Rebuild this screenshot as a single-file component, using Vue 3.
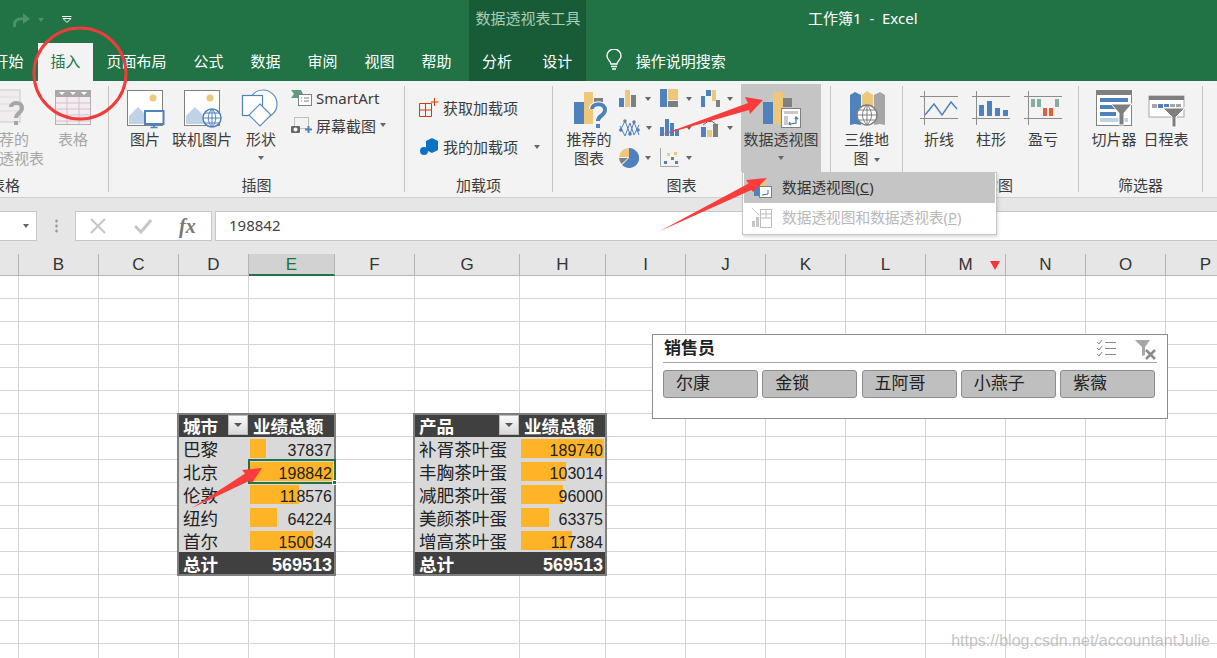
<!-- App.vue - Excel insert ribbon with pivot tables -->
<template>
  <div class="app">
    <div class="title-row">
      <div class="qat">
        <svg class="redo" width="20" height="16" viewBox="0 0 20 16"><path d="M3 15c-2-6 2-9 10-8" fill="none" stroke="#4f8f6c" stroke-width="3" /><path d="M11 1l7 6-7 5z" fill="#4f8f6c" /></svg>
        <span class="caret dim"></span>
        <svg class="qat-more" width="10" height="8" viewBox="0 0 10 8"><path d="M0 .5h9.500M1 2.500h8l-4 4z" fill="none" stroke="#fff" /></svg>
      </div>
      <div class="tool-title">数据透视表工具</div>
      <div class="doc-title">工作簿1 &nbsp;-&nbsp; Excel</div>
    </div>

    <div class="tab-row">
      <span v-for="tab in mainTabs" :key="tab" :class="['tab', { active: tab === '插入' }]">{{ tab }}</span>
      <div class="tool-tabs">
        <span class="tab">分析</span>
        <span class="tab">设计</span>
      </div>
      <svg class="bulb" width="18" height="22" viewBox="0 0 18 22"><path d="M6 15c0-3-4-4-4-8a7 7 0 0 1 14 0c0 4-4 5-4 8z" fill="none" stroke="#fff" stroke-width="1.400" /><path d="M6 17.500h6M7 20h4" stroke="#fff" stroke-width="1.500" /></svg>
      <span class="search">操作说明搜索</span>
    </div>

    <div class="ribbon">
      <!-- 表格 -->
      <section class="group g-table">
        <div class="tools">
          <div class="big muted w-rec">
            <svg width="40" height="40" viewBox="0 0 40 40"><rect x="1" y="1" width="32" height="32" fill="#f1ecee" stroke="#c9c9c9" /><path d="M1 8h32M1 15h32M1 22h32M12 1v32" stroke="#ddd" /><path d="M24 18c0-5 11-6 11 1 0 5-6 5-6 10" fill="none" stroke="#a6a6a6" stroke-width="4" /><rect x="27" y="32" width="4" height="4" fill="#a6a6a6" /></svg>
            <span>推荐的<br />数据透视表</span>
          </div>
          <div class="big muted w-table">
            <svg width="40" height="40" viewBox="0 0 40 40"><rect x="2.500" y="1.500" width="35" height="34" fill="#f4ecf0" stroke="#b5b1b3" /><rect x="2" y="1" width="36" height="7" fill="#a9a5a8" /><path d="M6 3h6l-3 3zM17 3h6l-3 3zM28 3h6l-3 3z" fill="#fff" /><path d="M3 14h34M3 20h34M3 26h34M3 32h34M14 8v27M26 8v27" stroke="#cfc5ca" /></svg>
            <span>表格</span>
          </div>
        </div>
        <div class="group-name name-table">表格</div>
      </section>

      <!-- 插图 -->
      <section class="group g-illus">
        <div class="tools">
          <div class="big w-pic">
            <svg width="40" height="40" viewBox="0 0 40 40"><rect x="2.500" y="1.500" width="35" height="35" fill="#fff" stroke="#7f7f7f" /><circle cx="28" cy="9" r="3.500" fill="#eec77a" /><path d="M4 35V27l9-9 9 9v8z" fill="#bfd2e6" /><rect x="20" y="22" width="18.500" height="13" fill="#fff" stroke="#4f81bd" stroke-width="2" /><path d="M29 35v3M25.500 38.500h7" stroke="#4f81bd" stroke-width="1.500" /></svg>
            <span>图片</span>
          </div>
          <div class="big w-online">
            <svg width="40" height="40" viewBox="0 0 40 40"><rect x="2.500" y="1.500" width="35" height="35" fill="#fff" stroke="#7f7f7f" /><circle cx="28" cy="9" r="3.500" fill="#eec77a" /><path d="M4 35V27l9-9 9 9v8z" fill="#bfd2e6" /><circle cx="30" cy="29" r="9" fill="#fff" stroke="#4f81bd" stroke-width="1.500" /><path d="M21 29h18M22.500 24h15M22.500 34h15M30 20c-5 5-5 13 0 18M30 20c5 5 5 13 0 18M30 20v18" fill="none" stroke="#4f81bd" /></svg>
            <span>联机图片</span>
          </div>
          <div class="big w-shape">
            <svg width="40" height="40" viewBox="0 0 40 40"><circle cx="22" cy="15" r="14" fill="#fff" stroke="#5b8cc0" stroke-width="1.200" /><rect x="1.500" y="6.500" width="20" height="20" fill="#fff" stroke="#4f81bd" stroke-width="1.200" /><path d="M19 15l11 11-11 11L8 26z" fill="#fff" stroke="#5b8cc0" stroke-width="1.200" /></svg>
            <span>形状</span>
            <i class="caret"></i>
          </div>
          <div class="side">
            <div class="side-row">
              <svg width="22" height="18" viewBox="0 0 22 18"><path d="M0 1h10l2 4-2 4H0l3-4z" fill="#5c9d82" /><rect x="7.500" y="5.500" width="13" height="11" fill="#fff" stroke="#7f7f7f" /><path d="M10 9h1M13 9h5M10 12h1M13 12h5" stroke="#7f7f7f" /></svg>
              <span>SmartArt</span>
            </div>
            <div class="side-row">
              <svg width="22" height="18" viewBox="0 0 22 18"><rect x="3.500" y="1.500" width="14" height="11" fill="none" stroke="#8a8a8a" stroke-dasharray="1 1" /><rect x="0" y="10" width="9" height="7" rx="1" fill="#666" /><circle cx="4.500" cy="13.500" r="2" fill="#fff" /><path d="M14 13.500h7M17.500 10v7" stroke="#4f81bd" stroke-width="2" /></svg>
              <span>屏幕截图</span>
              <i class="caret"></i>
            </div>
          </div>
        </div>
        <div class="group-name">插图</div>
      </section>

      <!-- 加载项 -->
      <section class="group g-addin">
        <div class="tools addin-list">
          <div class="addin">
            <svg width="20" height="20" viewBox="0 0 20 20"><path d="M.5 5.500h12v13H.5zM6.500 5.500v13M.5 12h12" fill="none" stroke="#d83b01" /><path d="M15.500 0v8M12 4h7.500" stroke="#d83b01" /></svg>
            <span>获取加载项</span>
          </div>
          <div class="addin">
            <svg width="20" height="20" viewBox="0 0 20 20"><path d="M7 4l6-3 6 3v9l-6 3-6-3z" fill="#0c72c4" /><circle cx="5" cy="14" r="4" fill="#0c72c4" /></svg>
            <span>我的加载项</span>
            <i class="caret addin-caret"></i>
          </div>
        </div>
        <div class="group-name">加载项</div>
      </section>

      <!-- 图表 -->
      <section class="group g-chart">
        <div class="tools">
          <div class="big w-rec-chart">
            <svg width="40" height="40" viewBox="0 0 40 40"><rect x="5" y="13" width="10" height="22" fill="#4f81bd" /><rect x="15" y="3" width="9" height="32" fill="#eec77a" /><rect x="25" y="9" width="9" height="5" fill="#7f7f7f" /><path d="M23 20c0-6 13-7 13 1 0 6-7 5-7 11" fill="none" stroke="#fff" stroke-width="6" /><path d="M23 20c0-6 13-7 13 1 0 6-7 5-7 11" fill="none" stroke="#4f81bd" stroke-width="4" /><rect x="27" y="35" width="4" height="4" fill="#4f81bd" /></svg>
            <span>推荐的<br />图表</span>
          </div>
          <div class="mini-grid">
            <div class="mini"><svg width="20" height="20" viewBox="0 0 20 20"><rect x="0" y="9" width="5" height="9" fill="#4f81bd" /><rect x="6" y="1" width="5" height="17" fill="#eec77a" /><rect x="12" y="6" width="5" height="12" fill="#7f7f7f" /></svg><i class="caret"></i></div>
            <div class="mini"><svg width="20" height="20" viewBox="0 0 20 20"><rect x="0" y="0" width="7" height="18" fill="#4f81bd" /><rect x="8" y="0" width="10" height="11" fill="#eec77a" /><rect x="8" y="12" width="10" height="6" fill="#7f7f7f" /></svg><i class="caret"></i></div>
            <div class="mini"><svg width="20" height="20" viewBox="0 0 20 20"><rect x="0" y="7" width="4" height="11" fill="#4f81bd" /><rect x="5" y="1" width="5" height="6" fill="#4f81bd" /><rect x="11" y="1" width="4" height="11" fill="#eec77a" /><rect x="15" y="11" width="4" height="7" fill="#7f7f7f" /></svg><i class="caret"></i></div>
            <div class="mini"><svg width="21" height="21" viewBox="0 0 21 21"><path d="M1 13l5-10 5 13 4-12 5 13M1 8l5 10 5-13 4 12 5-10" fill="none" stroke="#4f81bd" /><circle cx="6" cy="3" r="1.800" fill="#7f7f7f" /><circle cx="11" cy="16" r="1.800" fill="#4f81bd" /><circle cx="15" cy="4" r="1.800" fill="#7f7f7f" /><circle cx="1.800" cy="12" r="1.800" fill="#4f81bd" /><circle cx="19" cy="12" r="1.800" fill="#4f81bd" /></svg><i class="caret"></i></div>
            <div class="mini"><svg width="20" height="20" viewBox="0 0 20 20"><rect x="0" y="9" width="4" height="9" fill="#4f81bd" /><rect x="5" y="1" width="4" height="17" fill="#4f81bd" /><rect x="10" y="5" width="4" height="13" fill="#4f81bd" /><rect x="15" y="11" width="4" height="7" fill="#4f81bd" /></svg><i class="caret"></i></div>
            <div class="mini"><svg width="20" height="20" viewBox="0 0 20 20"><rect x="0" y="9" width="5" height="10" fill="#4f81bd" /><rect x="6" y="12" width="5" height="7" fill="#eec77a" /><rect x="12" y="6" width="5" height="13" fill="#7f7f7f" /><path d="M2 7l7-5 7 5" fill="none" stroke="#666" /><circle cx="9" cy="2.500" r="1.800" fill="#666" /></svg><i class="caret"></i></div>
            <div class="mini"><svg width="20" height="20" viewBox="0 0 20 20"><path d="M10 0a10 10 0 1 1-7 17l7-7z" fill="#4f81bd" /><path d="M10 9V0A10 10 0 0 0 0 9z" fill="#eec77a" /><path d="M9 10H0a10 10 0 0 0 2.500 6z" fill="#7f7f7f" /></svg><i class="caret"></i></div>
            <div class="mini"><svg width="20" height="20" viewBox="0 0 20 20"><path d="M.5 0v18.500H19" fill="none" stroke="#a6a6a6" /><rect x="4" y="13" width="3" height="3" fill="#4f81bd" /><rect x="7" y="5" width="3" height="3" fill="#eec77a" /><rect x="11" y="9" width="3" height="3" fill="#7f7f7f" /><rect x="14" y="4" width="3" height="3" fill="#eec77a" /><rect x="15" y="13" width="3" height="3" fill="#4f81bd" /></svg><i class="caret"></i></div>
          </div>
          <div class="big w-pivot open">
            <svg width="40" height="40" viewBox="0 0 40 40"><rect x="2" y="13" width="10" height="22" fill="#4f81bd" /><rect x="12" y="3" width="10" height="32" fill="#eec77a" /><rect x="22" y="9" width="9" height="9" fill="#7f7f7f" /><rect x="20.500" y="19.500" width="19" height="19" fill="#fff" stroke="#7f7f7f" /><path d="M23 22h14v3H23zM23 27h4v9h-4z" fill="#c9c9c9" /><path d="M29 35l6-1v-6M34 30l1-2 2 2M29 33l-1 2 2 1" fill="none" stroke="#2f75b5" stroke-width="1.200" /></svg>
            <span>数据透视图</span>
            <i class="caret"></i>
          </div>
        </div>
        <div class="group-name name-chart">图表</div>
      </section>

      <!-- 三维地图 -->
      <section class="group g-map">
        <div class="tools">
          <div class="big w-map">
            <svg width="40" height="40" viewBox="0 0 40 40"><path d="M3 6l5-3 6 3v30l-6-1-5 1z" fill="#4f81bd" /><path d="M15 6l5-4 6 4v26H15z" fill="#eec77a" /><path d="M27 6l6-3 5 3v30l-5-1-6 1z" fill="#a6a6a6" /><circle cx="20" cy="26" r="10" fill="#fff" stroke="#7f7f7f" stroke-width="1.400" /><path d="M10 26h20M11.500 21h17M11.500 31h17M20 16c-6 6-6 14 0 20M20 16c6 6 6 14 0 20M20 16v20" fill="none" stroke="#7f7f7f" /></svg>
            <span>三维地<br />图<i class="caret inline"></i></span>
          </div>
        </div>
      </section>

      <!-- 迷你图 -->
      <section class="group g-spark">
        <div class="tools">
          <div class="big w-spark">
            <svg width="40" height="40" viewBox="0 0 40 40"><path d="M1 7.500h38M1 29.500h38M5.500 2v34" stroke="#8c8c8c" /><path d="M6 26l9-11 8 11 9-13 6 7" fill="none" stroke="#4f81bd" stroke-width="1.400" /></svg>
            <span>折线</span>
          </div>
          <div class="big w-spark">
            <svg width="40" height="40" viewBox="0 0 40 40"><path d="M1 7.500h38M1 29.500h38M5.500 2v34" stroke="#8c8c8c" /><rect x="8" y="16" width="5" height="11" fill="#4f81bd" /><rect x="16" y="12" width="5" height="15" fill="#4f81bd" /><rect x="24" y="19" width="5" height="8" fill="#4f81bd" /><rect x="32" y="21" width="5" height="6" fill="#4f81bd" /></svg>
            <span>柱形</span>
          </div>
          <div class="big w-spark">
            <svg width="40" height="40" viewBox="0 0 40 40"><path d="M1 7.500h38M1 29.500h38M5.500 2v34" stroke="#8c8c8c" /><rect x="8" y="10" width="4" height="8" fill="#7fb19b" /><rect x="14" y="10" width="4" height="8" fill="#7fb19b" /><rect x="32" y="10" width="4" height="8" fill="#7fb19b" /><rect x="20" y="19" width="4" height="8" fill="#e0603e" /><rect x="26" y="19" width="4" height="8" fill="#e0603e" /></svg>
            <span>盈亏</span>
          </div>
        </div>
        <div class="group-name">迷你图</div>
      </section>

      <!-- 筛选器 -->
      <section class="group g-filter">
        <div class="tools">
          <div class="big w-slicer">
            <svg width="40" height="40" viewBox="0 0 40 40"><rect x="2.500" y="1.500" width="35" height="35" fill="#fff" stroke="#7f7f7f" /><rect x="2" y="1" width="36" height="5" fill="#7f7f7f" /><rect x="6" y="9" width="28" height="4" fill="#4f81bd" /><rect x="6" y="16" width="24" height="4" fill="#4f81bd" /><rect x="6" y="23" width="16" height="4" fill="#4f81bd" /><rect x="6" y="29" width="28" height="4" fill="#bfd2e6" /><path d="M17 15h21l-8 9v12h-5V24z" fill="#7f7f7f" stroke="#fff" /></svg>
            <span>切片器</span>
          </div>
          <div class="big w-slicer">
            <svg width="40" height="40" viewBox="0 0 40 40"><rect x="3" y="7" width="35" height="21" fill="#fff" stroke="#a6a6a6" /><rect x="3" y="7" width="35" height="4" fill="#7f7f7f" /><rect x="6" y="15" width="5" height="4" fill="#a6a6a6" /><rect x="12" y="15" width="5" height="4" fill="#4f81bd" /><rect x="18" y="15" width="5" height="3" fill="#4f81bd" /><rect x="24" y="15" width="5" height="3" fill="#a6a6a6" /><rect x="30" y="15" width="5" height="3" fill="#a6a6a6" /><path d="M17 19h22l-9 9v10h-4V28z" fill="#7f7f7f" stroke="#fff" /></svg>
            <span>日程表</span>
          </div>
        </div>
        <div class="group-name">筛选器</div>
      </section>
    </div>

    <div class="formula-row">
      <div class="name-box"><i class="caret"></i></div>
      <div class="grip"></div>
      <div class="fx-box">
        <svg width="18" height="18" viewBox="0 0 18 18"><path d="M2 2l14 14M16 2L2 16" stroke="#c6c6c6" stroke-width="2" /></svg>
        <svg width="18" height="18" viewBox="0 0 18 18"><path d="M1 9l6 6L17 3" fill="none" stroke="#c6c6c6" stroke-width="3" /></svg>
        <span class="fx">fx</span>
      </div>
      <div class="formula-input">198842</div>
    </div>

    <div class="sheet">
      <div v-for="col in columns" :key="col" :class="['col-head', { current: col === 'E' }]">
        {{ col }}
        <i v-if="col === 'M'" class="red-flag"></i>
      </div>
      <template v-for="cell in cells" :key="cell.id">
        <div :class="['cell', cell.kind]">
          <i v-if="cell.bar" class="bar" :style="{ width: cell.bar + 'px' }"></i>
          <span v-if="cell.text !== undefined" class="cell-text">{{ cell.text }}</span>
          <i v-if="cell.dropdown" class="dropdown"></i>
          <i v-if="cell.frame" class="frame" :style="{ width: cell.frame + 'px' }"></i>
          <i v-if="cell.selected" class="selection"></i>
        </div>
      </template>
    </div>

    <!-- floating slicer -->
    <div class="slicer">
      <div class="slicer-head">
        <b>销售员</b>
        <svg width="20" height="18" viewBox="0 0 20 18"><path d="M0 2l2 2 3-4M0 8l2 2 3-4M0 14l2 2 3-4" fill="none" stroke="#8a8a8a" /><path d="M8 2.500h11M8 8.500h11M8 14.500h11" stroke="#8a8a8a" /></svg>
        <svg class="clear" width="22" height="20" viewBox="0 0 22 20"><path d="M0 0h15l-5 7v8l-3 1V7z" fill="#a6a6a6" /><path d="M11 10l9 9M20 10l-9 9" stroke="#8a8a8a" stroke-width="2.500" /></svg>
      </div>
      <div class="slicer-items">
        <div v-for="name in sellers" :key="name" class="slicer-item">{{ name }}</div>
      </div>
    </div>

    <!-- dropdown under 数据透视图 -->
    <div class="menu">
      <div class="menu-item hot">
        <svg width="22" height="22" viewBox="0 0 22 22"><rect x="3" y="8" width="6" height="11" fill="#4f81bd" /><rect x="9" y="3" width="5" height="16" fill="#eec77a" /><rect x="8.500" y="9.500" width="12" height="11" fill="#fff" stroke="#7f7f7f" /><path d="M11 18l6-1v-4" fill="none" stroke="#2f75b5" /></svg>
        <span>数据透视图(<u>C</u>)</span>
      </div>
      <div class="menu-item off">
        <svg width="22" height="22" viewBox="0 0 22 22"><path d="M1 1l7 7" stroke="#c6c6c6" /><rect x="1" y="14" width="3" height="6" fill="#c6c6c6" /><rect x="5" y="10" width="3" height="10" fill="#c6c6c6" /><rect x="9.500" y="2.500" width="11" height="18" fill="#fff" stroke="#bdbdbd" /><path d="M10 7h10M10 11h10M15 3v8" stroke="#bdbdbd" /></svg>
        <span>数据透视图和数据透视表(<u>P</u>)</span>
      </div>
    </div>

    <!-- hand-drawn annotations -->
    <svg class="marks" width="1217" height="658" viewBox="0 0 1217 658">
      <ellipse cx="80" cy="73.500" rx="46" ry="45.500" fill="none" stroke="#f23b3b" stroke-width="3" />
      <path d="M658 136L748 103 745 97 763 100 750 114 749 110z" fill="#fb3c3c" />
      <path d="M660 231L748.500 183.500 746 180 767 178 753 192 751.500 190z" fill="#fb3c3c" />
      <path d="M192 508L245 473.500 242 470 262 468 252 483 249 481z" fill="#fb3c3c" />
    </svg>

    <div class="watermark">https://blog.csdn.net/accountantJulie</div>
  </div>
</template>

<script setup>
const mainTabs = ['开始', '插入', '页面布局', '公式', '数据', '审阅', '视图', '帮助'];
const columns = ['', 'B', 'C', 'D', 'E', 'F', 'G', 'H', 'I', 'J', 'K', 'L', 'M', 'N', 'O', 'P', 'Q'];
const sellers = ['尔康', '金锁', '五阿哥', '小燕子', '紫薇'];

const tables = [
  {
    col: 3,
    head: '城市',
    frame: 159,
    total: 569513,
    rows: [['巴黎', 37837], ['北京', 198842], ['伦敦', 118576], ['纽约', 64224], ['首尔', 150034]]
  },
  {
    col: 6,
    head: '产品',
    frame: 194,
    total: 569513,
    rows: [['补胥茶叶蛋', 189740], ['丰胸茶叶蛋', 103014], ['减肥茶叶蛋', 96000], ['美颜茶叶蛋', 63375], ['增高茶叶蛋', 117384]]
  }
];

const ROW_COUNT = 17;
const TOP_ROW = 6;

function tableCell(row, col) {
  for (const table of tables) {
    const side = col - table.col;
    const index = row - TOP_ROW;
    if ((side !== 0 && side !== 1) || index < 0 || index > 6) continue;
    if (index === 0) {
      return side === 0
        ? { kind: 'head', text: table.head, dropdown: true, frame: table.frame }
        : { kind: 'head', text: '业绩总额' };
    }
    if (index === 6) {
      return side === 0
        ? { kind: 'total', text: '总计' }
        : { kind: 'total num', text: table.total };
    }
    const [label, value] = table.rows[index - 1];
    if (side === 0) return { kind: 'body', text: label };
    const max = Math.max(...table.rows.map(r => r[1]));
    return {
      kind: 'body num',
      text: value,
      bar: Math.round((value / max) * 83),
      selected: value === 198842
    };
  }
  return { kind: '' };
}

const cells = [];
for (let row = 0; row < ROW_COUNT; row++) {
  for (let col = 0; col < columns.length; col++) {
    cells.push({ id: row + '-' + col, ...tableCell(row, col) });
  }
}
</script>

<style>
html,
body {
  margin: 0;
  overflow: hidden;
}
</style>

<style scoped>
.app {
  position: relative;
  width: 1217px;
  height: 658px;
  overflow: hidden;
  background: #fff;
  color: #3c3c3c;
  font-family: "Noto Sans", "Noto Sans CJK SC", sans-serif;
  font-size: 15px;
}

i {
  font-style: normal;
}

/* title bar */
.title-row {
  display: flex;
  height: 43px;
  background: #217346;
  color: #fff;
}

.qat {
  display: flex;
  align-items: center;
  width: 469px;
  padding-left: 12px;
  padding-bottom: 3px;
  box-sizing: border-box;
}

.qat-more {
  margin-left: 18px;
}

.tool-title {
  width: 117px;
  padding-left: 1px;
  box-sizing: border-box;
  background: #185c37;
  color: #a9cdb9;
  text-align: center;
  line-height: 37px;
}

.doc-title {
  margin-left: 222px;
  line-height: 37px;
}

.caret {
  display: inline-block;
  width: 0;
  height: 0;
  border-left: 3.500px solid transparent;
  border-right: 3.500px solid transparent;
  border-top: 4px solid #666;
}

.caret.dim {
  margin-left: 6px;
  border-top-color: #4f8f6c;
}

.caret.inline {
  margin-left: 5px;
  vertical-align: middle;
}

/* tabs */
.tab-row {
  display: flex;
  align-items: stretch;
  height: 38px;
  margin-left: -20px;
  background: #217346;
  color: #fff;
}

.tab {
  display: flex;
  flex: none;
  align-items: center;
  padding: 0 13.500px 4px;
  white-space: nowrap;
}

.tab.active {
  background: #f3f3f3;
  color: #217346;
  margin-left: 1px;
  padding: 0 12.500px 4px;
}

.tool-tabs {
  display: flex;
  flex: none;
  margin-left: 3.500px;
  width: 117px;
  background: #185c37;
  justify-content: center;
}

.tool-tabs .tab {
  padding: 0 15px 4px;
}

.bulb {
  margin: 6px 13px 0 19px;
}

.search {
  line-height: 36px;
}

/* ribbon */
.ribbon {
  display: flex;
  align-items: flex-start;
  height: 116px;
  padding-top: 5px;
  box-sizing: border-box;
  background: #f3f3f3;
}

.group {
  display: flex;
  flex-direction: column;
  box-sizing: border-box;
  height: 106px;
  border-right: 1px solid #c6c6c6;
}

.tools {
  display: flex;
  flex: 1;
  min-height: 0;
}

.group-name {
  height: 14px;
  line-height: 14px;
  text-align: center;
}

.g-table {
  width: 109px;
}

.g-table .tools {
  margin-left: -27px;
  gap: 8px;
}

.name-table {
  text-align: left;
  margin-left: -10px;
}

.g-illus {
  width: 296px;
}

.g-illus .tools {
  padding-left: 10px;
}

.g-addin {
  width: 148px;
}

.g-chart {
  width: 278px;
}

.g-chart .tools {
  padding-left: 6px;
}

.name-chart {
  padding-right: 20px;
}

.g-map {
  width: 72px;
}

.g-spark {
  width: 176px;
}

.g-spark .tools {
  padding-left: 10px;
}

.g-filter {
  width: 124px;
}

.g-filter .tools {
  padding-left: 9px;
}

.big {
  display: flex;
  flex-direction: column;
  align-items: center;
  padding-top: 3px;
  text-align: center;
  line-height: 19px;
  white-space: nowrap;
  flex: none;
  box-sizing: border-box;
}

.big svg {
  display: block;
  flex: none;
  margin-bottom: 1px;
}

.big > .caret {
  margin-top: 7px;
}

.big.muted {
  color: #a6a6a6;
}

.w-rec {
  width: 67px;
}

.w-table {
  width: 50px;
}

.w-pic {
  width: 52px;
}

.w-online {
  width: 62px;
}

.w-shape {
  width: 56px;
}

.w-rec-chart {
  width: 60px;
}

.w-pivot {
  width: 80px;
}

.w-pivot.open {
  height: 88px;
  margin-top: -2px;
  padding-top: 5px;
  background: #c5c5c5;
}

.w-map {
  width: 71px;
}

.w-spark {
  width: 52px;
}

.w-slicer {
  width: 52px;
}

.side {
  display: flex;
  flex-direction: column;
  margin-left: 2px;
}

.side-row {
  display: flex;
  align-items: center;
  gap: 3px;
  height: 24px;
}

.side-row:first-child {
  margin-bottom: 3px;
}

.side-row .caret {
  margin-left: 1px;
}

.addin-list {
  flex-direction: column;
  padding: 11px 0 0 14px;
  gap: 18px;
}

.addin {
  display: flex;
  align-items: center;
  gap: 4px;
  height: 21px;
}

.addin-caret {
  margin-left: 12px;
}

.mini-grid {
  display: grid;
  grid-template-columns: 41px 41px 41px;
  grid-auto-rows: 29.500px;
  margin-top: -2px;
  flex: none;
  width: 122px;
}

.mini {
  display: flex;
  align-items: center;
  gap: 6px;
}

.mini svg {
  flex: none;
}

/* formula bar */
.formula-row {
  display: flex;
  align-items: stretch;
  height: 44px;
  padding-top: 13px;
  box-sizing: border-box;
  background: #e6e6e6;
  border-top: 1px solid #d0d0d0;
}

.name-box {
  display: flex;
  align-items: center;
  justify-content: flex-end;
  width: 37px;
  padding-right: 7px;
  box-sizing: border-box;
  background: #fff;
  border: 1px solid #c6c6c6;
  border-left: none;
}

.grip {
  width: 38px;
  margin: 7px 0;
  background: radial-gradient(circle, #999 1.200px, transparent 1.500px) center / 3px 5px repeat-y;
}

.fx-box {
  display: flex;
  align-items: center;
  width: 137px;
  padding-left: 13px;
  gap: 27px;
  box-sizing: border-box;
  background: #fff;
  border: 1px solid #c6c6c6;
}

.fx {
  font-family: "Liberation Serif", serif;
  font-style: italic;
  font-weight: 700;
  font-size: 20px;
  color: #777;
}

.formula-input {
  flex: 1;
  margin-left: 3px;
  padding-left: 13px;
  line-height: 27px;
  background: #fff;
  border: 1px solid #c6c6c6;
  border-right: none;
  color: #444;
}

/* worksheet */
.sheet {
  display: grid;
  grid-template-columns: 19px 80px 80px 70px 86px 80px 105px 86px repeat(9, 80px);
  grid-template-rows: 22px repeat(17, 23px);
  padding-top: 13px;
  background: linear-gradient(#e6e6e6 35px, transparent 35px);
}

.col-head {
  position: relative;
  text-align: center;
  line-height: 22px;
  font-family: "Liberation Sans", sans-serif;
  font-size: 17px;
  color: #333;
  box-sizing: border-box;
  background: #e6e6e6;
  border-right: 1px solid #b5b5b5;
  border-bottom: 1px solid #b5b5b5;
}

.col-head.current {
  background: #d2d2d2;
  color: #217346;
  border-bottom: 2px solid #217346;
}

.red-flag {
  position: absolute;
  top: 7px;
  right: 5px;
  width: 0;
  height: 0;
  border-left: 5px solid transparent;
  border-right: 5px solid transparent;
  border-top: 9px solid #f33;
}

.cell {
  position: relative;
  box-sizing: border-box;
  border-right: 1px solid #d4d4d4;
  border-bottom: 1px solid #d4d4d4;
  white-space: nowrap;
  color: #222;
  font-size: 17.600px;
  line-height: 24px;
}

.cell-text {
  position: relative;
  padding-left: 4px;
}

.cell.num {
  text-align: right;
  font-family: "Liberation Sans", sans-serif;
  font-size: 16px;
}

.cell.num .cell-text {
  top: 2px;
  padding: 0 2px 0 0;
}

.cell.head,
.cell.total {
  background: #404040;
  border-color: #404040;
  color: #fff;
  font-weight: 700;
}

.cell.total.num {
  font-size: 18px;
}

.cell.total.num .cell-text {
  top: 1px;
}

.cell.body {
  background: #d9d9d9;
  border-color: #d9d9d9;
}

.bar {
  position: absolute;
  top: 2px;
  left: 1px;
  height: 19px;
  background: #ffb327;
}

.dropdown {
  position: absolute;
  top: 1px;
  right: 0;
  width: 20px;
  height: 20px;
  box-sizing: border-box;
  background: linear-gradient(#fafafa, #d9d9d9);
  border: 1px solid #bbb;
}

.dropdown::after {
  content: "";
  position: absolute;
  top: 7px;
  left: 5px;
  border-left: 4px solid transparent;
  border-right: 4px solid transparent;
  border-top: 4px solid #555;
}

.frame {
  position: absolute;
  top: -1px;
  left: -2px;
  height: 163px;
  box-sizing: border-box;
  border: 2px solid #7f7f7f;
  z-index: 1;
}

.selection {
  position: absolute;
  top: -1px;
  left: -1px;
  width: 88px;
  height: 25px;
  box-sizing: border-box;
  border: 2px solid #217346;
  z-index: 2;
}

.selection::after {
  content: "";
  position: absolute;
  right: -3px;
  bottom: -3px;
  width: 5px;
  height: 5px;
  background: #217346;
  border: 1px solid #fff;
  box-sizing: border-box;
}

/* slicer */
.slicer {
  position: absolute;
  top: 334px;
  left: 652px;
  width: 516px;
  height: 85px;
  box-sizing: border-box;
  padding: 0 10px;
  background: #fff;
  border: 1px solid #8c8c8c;
}

.slicer-head {
  display: flex;
  align-items: center;
  height: 28px;
  padding-right: 4px;
  box-sizing: border-box;
  border-bottom: 1px solid #a6a6a6;
  color: #222;
}

.slicer-head b {
  flex: 1;
  padding: 0 0 1px 1px;
  font-size: 17px;
  line-height: 24px;
}

.slicer-head .clear {
  margin: 2px -4px 0 18px;
}

.slicer-items {
  display: flex;
  gap: 4.250px;
  margin-top: 7px;
}

.slicer-item {
  flex: none;
  width: 95px;
  height: 28px;
  padding-left: 12px;
  box-sizing: border-box;
  background: #bfbfbf;
  border: 1px solid #8c8c8c;
  border-radius: 3px;
  color: #222;
  font-size: 17px;
  line-height: 24px;
}

/* menu */
.menu {
  position: absolute;
  top: 172px;
  left: 742px;
  width: 255px;
  height: 63px;
  box-sizing: border-box;
  padding: 0 1px;
  background: #fff;
  border: 1px solid #c6c6c6;
  box-shadow: 1px 2px 3px rgba(0, 0, 0, 0.15);
}

.menu-item {
  display: flex;
  align-items: center;
  height: 30px;
  padding-left: 7px;
  gap: 9px;
  font-size: 14.700px;
}

.menu-item span {
  line-height: 18px;
  margin-bottom: 2px;
}

.menu-item.hot {
  background: #c5c5c5;
  color: #333;
}

.menu-item.off {
  color: #b8b8b8;
}

/* annotations */
.marks {
  position: absolute;
  top: 0;
  left: 0;
  z-index: 5;
  pointer-events: none;
}

.watermark {
  position: absolute;
  right: 7px;
  bottom: 8px;
  color: rgba(170, 170, 170, 0.7);
  font-family: "Liberation Sans", sans-serif;
  font-size: 16px;
  z-index: 5;
}
</style>
